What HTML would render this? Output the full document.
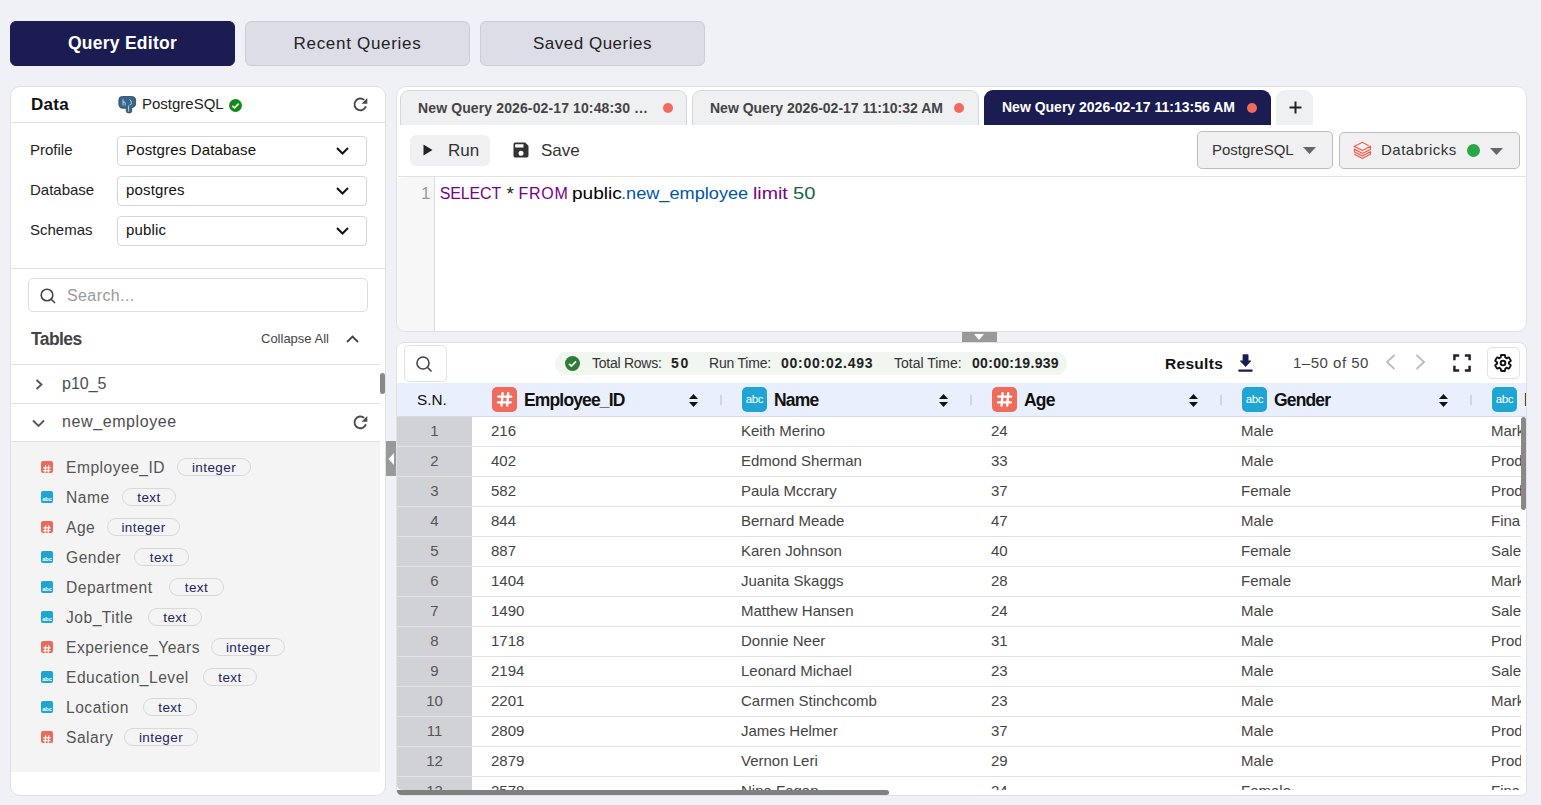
<!DOCTYPE html>
<html><head><meta charset="utf-8">
<style>
*{box-sizing:border-box;margin:0;padding:0}
html,body{width:1541px;height:805px;overflow:hidden;background:#f0f1f6;font-family:"Liberation Sans",sans-serif;color:#222}
.a{position:absolute;white-space:nowrap}
.topbtn{position:absolute;top:21px;height:45px;width:225px;border-radius:6px;font-size:17px;display:flex;align-items:center;justify-content:center;background:#dddde7;border:1px solid #cdcdd8;color:#222}
.topbtn.act{background:#1b1c51;border-color:#1b1c51;color:#fff;font-weight:bold}
.panel{position:absolute;background:#fff;border:1px solid #e0e1e4;border-radius:10px}
.lbl{position:absolute;left:19px;font-size:15px;color:#222;white-space:nowrap;margin-top:-1px}
.sel{position:absolute;left:106px;width:250px;height:30px;border:1px solid #d6d6d6;border-radius:4px;font-size:15px;padding-left:8px;line-height:25px;color:#111;white-space:nowrap;letter-spacing:0.15px}
.sel svg{position:absolute;left:218px;top:10px}
.hl{position:absolute;height:1px;background:#e2e2e2}
.col{position:absolute;left:30px;height:20px;white-space:nowrap}
.col .ic{position:absolute;left:0;top:4px;width:12px;height:12px;border-radius:2px}
.col .ic.n{background:#ec6a5a}
.col .ic.t{background:#1ea5d3}
.col .nm{position:absolute;left:25px;top:0.5px;font-size:15.6px;color:#555;line-height:20px;letter-spacing:0.5px}
.pill{position:absolute;top:1px;height:18px;border:1px solid #d9d9d9;border-radius:9px;font-size:13.5px;color:#23265e;line-height:17px;text-align:center;letter-spacing:0.4px}
.tab{position:absolute;top:3px;height:35px;border:1px solid #d6d6da;border-bottom:none;border-radius:9px 9px 0 0;background:#eff0f2;font-size:14px;font-weight:bold;color:#444;white-space:nowrap}
.tab .t{position:absolute;top:8.5px}
.tab .dot{position:absolute;top:12px;width:10px;height:10px;border-radius:50%;background:#f06b5b}
.tab.act{background:#1b1c51;border-color:#1b1c51;color:#fff}
.dd{position:absolute;background:#f0f0f2;border:1px solid #bdbdbd;border-radius:5px;font-size:15px;color:#333;white-space:nowrap}
.th{position:absolute;top:0;height:33px}
.th .hi{position:absolute;left:20px;top:4px;width:25px;height:25px;border-radius:5px}
.th .hi.n{background:#ef6b5b}
.th .hi.t{background:#1ea5d3}
.th .ht{position:absolute;left:52px;top:6.5px;font-size:17.5px;font-weight:bold;color:#111;letter-spacing:-0.85px}
.th .so{position:absolute;left:217px;top:10px}
.th .sp{position:absolute;left:248px;top:12px;width:2px;height:10px;background:#d3d6de}
.row{position:absolute;left:0;width:1124px;height:30px;border-bottom:1px solid #e3e3e3}
.row .sn{position:absolute;left:0;top:0;width:75px;height:29px;background:#d1d2d6;text-align:center;font-size:15px;color:#555;line-height:27px}
.row .c{position:absolute;top:0;font-size:15px;color:#444;line-height:27px;white-space:nowrap}
</style></head><body>

<div class="topbtn act" style="left:10px;font-size:17.5px;letter-spacing:0.25px">Query Editor</div>
<div class="topbtn" style="left:245px;letter-spacing:0.7px">Recent Queries</div>
<div class="topbtn" style="left:480px;letter-spacing:0.5px">Saved Queries</div>

<!-- LEFT PANEL -->
<div class="panel" style="left:10px;top:86px;width:376px;height:710px;overflow:hidden">
  <div class="a" style="left:20px;top:8px;font-size:17px;font-weight:bold;color:#111;letter-spacing:0.3px">Data</div>
  <svg class="a" style="left:107px;top:9px" width="19" height="18" viewBox="0 0 19 18"><path d="M0.9 3.6Q0.9 0.5 4.5 0.5H13.5Q17.6 0.5 17.6 4V8Q17.6 11.2 13.7 11.8V15.4Q13.7 16.9 11 16.9Q8.3 16.9 8.3 15.4V12.2H4.6Q0.9 12.2 0.9 8Z" fill="#336791" stroke="#4a4a4a" stroke-width="0.9"/><path d="M5 3.2V9.6M5 6.4Q6.9 4.9 7.2 7V9.6M11.6 3.4Q13.7 4.6 13.3 7.6Q12.9 9.2 11.8 8.6M10.6 9.5V15.5" stroke="#e6eef5" stroke-width="0.75" fill="none"/></svg>
  <div class="a" style="left:131px;top:8px;font-size:15px;color:#222">PostgreSQL</div>
  <svg class="a" style="left:218px;top:12px" width="13" height="13" viewBox="0 0 13 13"><circle cx="6.5" cy="6.5" r="6.5" fill="#138a17"/><path d="M3.3 6.8l2.2 2.1 4.2-4.3" stroke="#fff" stroke-width="1.6" fill="none"/></svg>
  <svg class="a" style="left:341px;top:9px" width="16" height="16" viewBox="0 0 16 16"><path d="M13.94 10.42A5.9 5.9 0 1 1 12.19 3.88" stroke="#4a4a4a" stroke-width="1.9" fill="none"/><path d="M15.3 1.9V7.8H9.5z" fill="#4a4a4a"/></svg>
  <div class="hl" style="left:0;top:35px;width:376px"></div>

  <div class="lbl" style="top:55px">Profile</div>
  <div class="sel" style="top:49px">Postgres Database<svg width="13" height="8" viewBox="0 0 13 8"><path d="M1 1l5.5 5.5L12 1" stroke="#111" stroke-width="2" fill="none"/></svg></div>
  <div class="lbl" style="top:95px">Database</div>
  <div class="sel" style="top:89px">postgres<svg width="13" height="8" viewBox="0 0 13 8"><path d="M1 1l5.5 5.5L12 1" stroke="#111" stroke-width="2" fill="none"/></svg></div>
  <div class="lbl" style="top:135px">Schemas</div>
  <div class="sel" style="top:129px">public<svg width="13" height="8" viewBox="0 0 13 8"><path d="M1 1l5.5 5.5L12 1" stroke="#111" stroke-width="2" fill="none"/></svg></div>
  <div class="hl" style="left:0;top:181px;width:376px"></div>

  <div class="a" style="left:17px;top:191px;width:340px;height:34px;border:1px solid #dedede;border-radius:5px"></div>
  <svg class="a" style="left:29px;top:201px" width="17" height="16" viewBox="0 0 17 16"><circle cx="7" cy="7" r="5.8" stroke="#444" stroke-width="1.6" fill="none"/><path d="M11.2 11.2L15 15" stroke="#444" stroke-width="1.6"/></svg>
  <div class="a" style="left:56px;top:200px;font-size:16px;color:#9a9a9a;letter-spacing:0.4px">Search...</div>

  <div class="a" style="left:20px;top:242px;font-size:17.5px;font-weight:bold;color:#444;letter-spacing:-0.6px">Tables</div>
  <div class="a" style="left:250px;top:244px;font-size:13px;color:#444">Collapse All</div>
  <svg class="a" style="left:335px;top:247px" width="13" height="10" viewBox="0 0 13 10"><path d="M1 8l5.5-5.5L12 8" stroke="#444" stroke-width="1.8" fill="none"/></svg>
  <div class="hl" style="left:0;top:277px;width:369px"></div>

  <svg class="a" style="left:24px;top:292px" width="9" height="11" viewBox="0 0 9 11"><path d="M1.5 1l5 4.5-5 4.5" stroke="#555" stroke-width="1.8" fill="none"/></svg>
  <div class="a" style="left:51px;top:288px;font-size:16px;color:#4d4d4d">p10_5</div>
  <div class="hl" style="left:0;top:316px;width:369px"></div>

  <svg class="a" style="left:21px;top:332px" width="13" height="9" viewBox="0 0 13 9"><path d="M1 1.5l5.5 5.5L12 1.5" stroke="#555" stroke-width="1.8" fill="none"/></svg>
  <div class="a" style="left:51px;top:326px;font-size:16px;color:#4d4d4d;letter-spacing:0.6px">new_employee</div>
  <svg class="a" style="left:341px;top:327px" width="16" height="16" viewBox="0 0 16 16"><path d="M13.94 10.42A5.9 5.9 0 1 1 12.19 3.88" stroke="#4a4a4a" stroke-width="1.9" fill="none"/><path d="M15.3 1.9V7.8H9.5z" fill="#4a4a4a"/></svg>
  <div class="hl" style="left:0;top:354px;width:369px"></div>

  <div class="a" style="left:0;top:355px;width:369px;height:330px;background:#f4f4f4"></div>
  <div class="a" style="left:369px;top:286px;width:5px;height:21px;border-radius:3px;background:#888"></div>

  <div class="col" style="top:370px"><div class="ic n"><svg width=12 height=12 viewBox="0 0 12 12"><path d="M4.7 2.4L4.1 9.7M7.8 2.4L7.2 9.7M2.2 4.8h7.4M2.1 7.6h7.4" stroke="#fff" stroke-width="1.15"/></svg></div><div class="nm">Employee_ID</div><div class="pill" style="left:136px;width:74px">integer</div></div>
  <div class="col" style="top:400px"><div class="ic t"><svg width=12 height=12 viewBox="0 0 12 12"><text x="6" y="7.6" font-size="5.6" font-weight="bold" fill="#fff" text-anchor="middle" font-family="Liberation Sans">abc</text></svg></div><div class="nm">Name</div><div class="pill" style="left:81px;width:54px">text</div></div>
  <div class="col" style="top:430px"><div class="ic n"><svg width=12 height=12 viewBox="0 0 12 12"><path d="M4.7 2.4L4.1 9.7M7.8 2.4L7.2 9.7M2.2 4.8h7.4M2.1 7.6h7.4" stroke="#fff" stroke-width="1.15"/></svg></div><div class="nm">Age</div><div class="pill" style="left:66px;width:73px">integer</div></div>
  <div class="col" style="top:460px"><div class="ic t"><svg width=12 height=12 viewBox="0 0 12 12"><text x="6" y="7.6" font-size="5.6" font-weight="bold" fill="#fff" text-anchor="middle" font-family="Liberation Sans">abc</text></svg></div><div class="nm">Gender</div><div class="pill" style="left:93px;width:55px">text</div></div>
  <div class="col" style="top:490px"><div class="ic t"><svg width=12 height=12 viewBox="0 0 12 12"><text x="6" y="7.6" font-size="5.6" font-weight="bold" fill="#fff" text-anchor="middle" font-family="Liberation Sans">abc</text></svg></div><div class="nm">Department</div><div class="pill" style="left:128px;width:55px">text</div></div>
  <div class="col" style="top:520px"><div class="ic t"><svg width=12 height=12 viewBox="0 0 12 12"><text x="6" y="7.6" font-size="5.6" font-weight="bold" fill="#fff" text-anchor="middle" font-family="Liberation Sans">abc</text></svg></div><div class="nm">Job_Title</div><div class="pill" style="left:107px;width:54px">text</div></div>
  <div class="col" style="top:550px"><div class="ic n"><svg width=12 height=12 viewBox="0 0 12 12"><path d="M4.7 2.4L4.1 9.7M7.8 2.4L7.2 9.7M2.2 4.8h7.4M2.1 7.6h7.4" stroke="#fff" stroke-width="1.15"/></svg></div><div class="nm">Experience_Years</div><div class="pill" style="left:170px;width:74px">integer</div></div>
  <div class="col" style="top:580px"><div class="ic t"><svg width=12 height=12 viewBox="0 0 12 12"><text x="6" y="7.6" font-size="5.6" font-weight="bold" fill="#fff" text-anchor="middle" font-family="Liberation Sans">abc</text></svg></div><div class="nm">Education_Level</div><div class="pill" style="left:162px;width:54px">text</div></div>
  <div class="col" style="top:610px"><div class="ic t"><svg width=12 height=12 viewBox="0 0 12 12"><text x="6" y="7.6" font-size="5.6" font-weight="bold" fill="#fff" text-anchor="middle" font-family="Liberation Sans">abc</text></svg></div><div class="nm">Location</div><div class="pill" style="left:102px;width:54px">text</div></div>
  <div class="col" style="top:640px"><div class="ic n"><svg width=12 height=12 viewBox="0 0 12 12"><path d="M4.7 2.4L4.1 9.7M7.8 2.4L7.2 9.7M2.2 4.8h7.4M2.1 7.6h7.4" stroke="#fff" stroke-width="1.15"/></svg></div><div class="nm">Salary</div><div class="pill" style="left:83px;width:74px">integer</div></div>
</div>

<!-- collapse handle -->
<div class="a" style="left:386px;top:441px;width:10px;height:35px;background:#999"></div>
<svg class="a" style="left:387px;top:452px" width="8" height="14" viewBox="0 0 8 14"><path d="M7 1L1.5 7 7 13z" fill="#fff"/></svg>

<!-- EDITOR PANEL -->
<div class="panel" id="ed" style="left:396px;top:86px;width:1131px;height:246px;overflow:hidden"><div class="a" style="left:1px;top:0;width:1129px;height:244px">
  <div class="tab" style="left:2px;width:287px"><span class="t" style="left:17px;letter-spacing:0.12px">New Query 2026-02-17 10:48:30 …</span><span class="dot" style="left:262px"></span></div>
  <div class="tab" style="left:294px;width:287px"><span class="t" style="left:17px">New Query 2026-02-17 11:10:32 AM</span><span class="dot" style="left:261px"></span></div>
  <div class="tab act" style="left:586px;width:287px"><span class="t" style="left:17px;top:7.5px">New Query 2026-02-17 11:13:56 AM</span><span class="dot" style="left:262px"></span></div>
  <div class="tab" style="left:878px;width:37px;border:none"><svg class="a" style="left:13px;top:11px" width="13" height="13" viewBox="0 0 13 13"><path d="M6.5 0.5v12M0.5 6.5h12" stroke="#222" stroke-width="2"/></svg></div>

  <div class="a" style="left:12px;top:48px;width:80px;height:31px;background:#f0f0f2;border-radius:6px"></div>
  <svg class="a" style="left:25px;top:57px" width="10" height="12" viewBox="0 0 10 12"><path d="M0.5 0.5L9.5 6 0.5 11.5z" fill="#222"/></svg>
  <div class="a" style="left:50px;top:54px;font-size:17px;color:#333">Run</div>
  <svg class="a" style="left:113px;top:53px" width="20" height="20" viewBox="0 0 24 24"><path d="M17 3H5a2 2 0 0 0-2 2v14a2 2 0 0 0 2 2h14a2 2 0 0 0 2-2V7l-4-4zm-5 16a3 3 0 1 1 0-6 3 3 0 0 1 0 6zm3-10H5V5h10v4z" fill="#333"/></svg>
  <div class="a" style="left:143px;top:54px;font-size:17px;color:#333">Save</div>

  <div class="dd" style="left:799px;top:44px;width:136px;height:38px"><span class="a" style="left:14px;top:9px">PostgreSQL</span><svg class="a" style="left:105px;top:15px" width="13" height="7" viewBox="0 0 13 7"><path d="M0 0h13L6.5 7z" fill="#666"/></svg></div>
  <div class="dd" style="left:941px;top:45px;width:181px;height:37px"><svg class="a" style="left:10px;top:6px" width="23" height="23" viewBox="0 0 23 23"><path d="M18.6 6.6L12.4 3.3 4.3 7.4 12.4 11.4 20.4 7.4V10.4L12.4 14.4 4.4 10.2V12.9L12.4 16.9 20.4 12.7V15.2L12.4 19.4 4.3 15.3" fill="none" stroke="#ff4530" stroke-width="1.05" stroke-linejoin="miter"/></svg><span class="a" style="left:41px;top:8px;letter-spacing:0.5px">Databricks</span><span class="a" style="left:127px;top:11px;width:13px;height:13px;border-radius:50%;background:#28a745"></span><svg class="a" style="left:150px;top:15px" width="13" height="7" viewBox="0 0 13 7"><path d="M0 0h13L6.5 7z" fill="#666"/></svg></div>
  <div class="hl" style="left:0;top:89px;width:1128px"></div>

  <div class="a" style="left:-1px;top:90px;width:38px;height:160px;background:#f7f7f7;border-right:1px solid #ddd;border-top-left-radius:8px"></div>
  <div class="a" style="left:23px;top:97px;font-size:17px;color:#999">1</div>
  <span class="a" style="left:41.8px;top:98px;font-size:16px;color:#708;letter-spacing:-0.15px">SELECT</span><span class="a" style="left:108.5px;top:96px;font-size:19px;color:#222;letter-spacing:0px">*</span><span class="a" style="left:120.4px;top:98px;font-size:16px;color:#708;letter-spacing:0.8px">FROM</span><span class="a" style="left:173.6px;top:98px;font-size:16px;color:#000;transform:scaleX(1.19);transform-origin:0 0">public</span><span class="a" style="left:222.9px;top:98px;font-size:16px;color:#05a;transform:scaleX(1.135);transform-origin:0 0">.new_employee</span><span class="a" style="left:355.0px;top:98px;font-size:16px;color:#708;transform:scaleX(1.22);transform-origin:0 0">limit</span><span class="a" style="left:394.5px;top:98px;font-size:16px;color:#164;transform:scaleX(1.26);transform-origin:0 0">50</span>
</div></div>

<div class="a" style="left:962px;top:332px;width:35px;height:10px;background:#999"></div>
<svg class="a" style="left:974px;top:334px" width="10" height="6" viewBox="0 0 10 6"><path d="M0 0h10L5 6z" fill="#fff"/></svg>
<!-- RESULTS PANEL -->
<div class="panel" id="res" style="left:396px;top:342px;width:1131px;height:454px;border-radius:8px 8px 6px 6px"><div class="a" style="left:1px;top:0;width:1129px;height:452px">
  <div class="a" style="left:6px;top:2px;width:43px;height:37px;border:1px solid #e2e2e2;border-radius:5px"></div>
  <svg class="a" style="left:18px;top:13px" width="17" height="16" viewBox="0 0 17 16"><circle cx="7" cy="7" r="6" stroke="#444" stroke-width="1.6" fill="none"/><path d="M11.3 11.3L15.5 15.5" stroke="#444" stroke-width="1.6"/></svg>
  <div class="a" style="left:157px;top:9px;width:512px;height:23px;border-radius:12px;background:#f1f6f1"></div>
  <svg class="a" style="left:167px;top:13px" width="15" height="15" viewBox="0 0 15 15"><circle cx="7.5" cy="7.5" r="7.5" fill="#2e7d32"/><path d="M4 7.8l2.4 2.3 4.6-4.8" stroke="#fff" stroke-width="1.7" fill="none"/></svg>
  <div class="a" style="left:194px;top:12px;font-size:14px;color:#333;letter-spacing:-0.25px">Total Rows:</div>
  <div class="a" style="left:273px;top:12px;font-size:14px;font-weight:bold;color:#222;letter-spacing:1.6px">50</div>
  <div class="a" style="left:311px;top:12px;font-size:14px;color:#333;letter-spacing:-0.2px">Run Time:</div>
  <div class="a" style="left:383px;top:12px;font-size:14px;font-weight:bold;color:#222;letter-spacing:0.75px">00:00:02.493</div>
  <div class="a" style="left:496px;top:12px;font-size:14px;color:#333">Total Time:</div>
  <div class="a" style="left:574px;top:12px;font-size:14px;font-weight:bold;color:#222;letter-spacing:0.3px">00:00:19.939</div>

  <div class="a" style="left:767px;top:12px;font-size:15.5px;font-weight:bold;color:#111;letter-spacing:0.3px">Results</div>
  <svg class="a" style="left:840px;top:11px" width="16" height="19" viewBox="0 0 16 19"><path d="M4.6 1.2Q4.6 0.2 5.6 0.2H9.5Q10.5 0.2 10.5 1.2V6.6H12.9Q13.4 6.8 13 7.3L7.6 13 2.2 7.3Q1.8 6.8 2.3 6.6H4.6z" fill="#1b1c51"/><rect x="0.2" y="15.6" width="14.5" height="2.1" rx="1" fill="#1b1c51"/></svg>
  <div class="a" style="left:895px;top:11px;font-size:15px;color:#444;letter-spacing:0.5px">1–50 of 50</div>
  <svg class="a" style="left:987px;top:11px" width="11" height="16" viewBox="0 0 11 16"><path d="M9.5 1L2 8l7.5 7" stroke="#bbb" stroke-width="1.8" fill="none"/></svg>
  <svg class="a" style="left:1017px;top:11px" width="11" height="16" viewBox="0 0 11 16"><path d="M1.5 1L9 8l-7.5 7" stroke="#bbb" stroke-width="1.8" fill="none"/></svg>
  <svg class="a" style="left:1055px;top:11px" width="18" height="18" viewBox="0 0 19 19"><path d="M1.5 6.5V1.5h5M12.5 1.5h5v5M17.5 12.5v5h-5M6.5 17.5h-5v-5" stroke="#222" stroke-width="2.6" fill="none"/></svg>
  <div class="a" style="left:1089px;top:4px;width:33px;height:32px;border:1px solid #e2e2e2;border-radius:5px"></div>
  <svg class="a" style="left:1095px;top:10px" width="20" height="20" viewBox="0 0 24 24"><path d="M19.14 12.94c.04-.3.06-.61.06-.94 0-.32-.02-.64-.07-.94l2.03-1.58a.49.49 0 0 0 .12-.61l-1.92-3.32a.488.488 0 0 0-.59-.22l-2.39.96c-.5-.38-1.03-.7-1.62-.94l-.36-2.540a.484.484 0 0 0-.48-.41h-3.84c-.24 0-.43.17-.47.41l-.36 2.54c-.59.24-1.13.57-1.62.94l-2.39-.96c-.22-.08-.47 0-.59.22L2.74 8.87c-.12.21-.08.47.12.61l2.030 1.58c-.05.3-.09.63-.09.94s.02.64.07.94l-2.03 1.58a.49.49 0 0 0-.12.61l1.92 3.32c.12.22.37.29.59.22l2.39-.96c.5.38 1.03.7 1.62.94l.36 2.54c.05.24.24.41.48.41h3.84c.24 0 .44-.17.47-.41l.36-2.54c.59-.24 1.13-.56 1.62-.94l2.39.96c.22.08.47 0 .59-.22l1.92-3.32c.12-.22.07-.47-.12-.61l-2.01-1.58z" fill="none" stroke="#111" stroke-width="2.3" stroke-linejoin="round"/><circle cx="12" cy="12" r="2.8" fill="none" stroke="#111" stroke-width="2.3"/></svg>

  <div class="a" style="left:-1px;top:40px;width:1129px;height:34px;background:#e9effc;border-bottom:1px solid #d5dae6"></div>
  <div class="a" style="left:-1px;top:40px;width:1129px;height:33px;overflow:hidden">
    <div class="a" style="left:20px;top:8px;font-size:15.3px;color:#111">S.N.</div>
    <div class="th" style="left:75px;width:250px"><div class="hi n"><svg width="25" height="25" viewBox="0 0 25 25"><path d="M10.6 6.2L9.6 18.6M16.2 6.2L15.2 18.6M6.3 9.7H19.2M5.9 15.4H18.8" stroke="#fff" stroke-width="2.3" stroke-linecap="round"/></svg></div><div class="ht">Employee_ID</div><div class="so"><svg width="9" height="13" viewBox="0 0 9 13"><path d="M4.5 0L9 5H0zM4.5 13L0 8h9z" fill="#111"/></svg></div><div class="sp"></div></div><div class="th" style="left:325px;width:250px"><div class="hi t"><svg width="25" height="25" viewBox="0 0 25 25"><text x="12.5" y="16.3" font-size="11.5" fill="#fff" text-anchor="middle" font-family="Liberation Sans" letter-spacing="-0.4">abc</text></svg></div><div class="ht">Name</div><div class="so"><svg width="9" height="13" viewBox="0 0 9 13"><path d="M4.5 0L9 5H0zM4.5 13L0 8h9z" fill="#111"/></svg></div><div class="sp"></div></div><div class="th" style="left:575px;width:250px"><div class="hi n"><svg width="25" height="25" viewBox="0 0 25 25"><path d="M10.6 6.2L9.6 18.6M16.2 6.2L15.2 18.6M6.3 9.7H19.2M5.9 15.4H18.8" stroke="#fff" stroke-width="2.3" stroke-linecap="round"/></svg></div><div class="ht">Age</div><div class="so"><svg width="9" height="13" viewBox="0 0 9 13"><path d="M4.5 0L9 5H0zM4.5 13L0 8h9z" fill="#111"/></svg></div><div class="sp"></div></div><div class="th" style="left:825px;width:250px"><div class="hi t"><svg width="25" height="25" viewBox="0 0 25 25"><text x="12.5" y="16.3" font-size="11.5" fill="#fff" text-anchor="middle" font-family="Liberation Sans" letter-spacing="-0.4">abc</text></svg></div><div class="ht">Gender</div><div class="so"><svg width="9" height="13" viewBox="0 0 9 13"><path d="M4.5 0L9 5H0zM4.5 13L0 8h9z" fill="#111"/></svg></div><div class="sp"></div></div><div class="th" style="left:1075px;width:250px"><div class="hi t"><svg width="25" height="25" viewBox="0 0 25 25"><text x="12.5" y="16.3" font-size="11.5" fill="#fff" text-anchor="middle" font-family="Liberation Sans" letter-spacing="-0.4">abc</text></svg></div><div class="ht">Department</div><div class="so"><svg width="9" height="13" viewBox="0 0 9 13"><path d="M4.5 0L9 5H0zM4.5 13L0 8h9z" fill="#111"/></svg></div><div class="sp"></div></div>
  </div>
  <div class="a" style="left:-1px;top:74px;width:1124px;height:373px;overflow:hidden;border-bottom-left-radius:5px"><div class="row" style="top:0px"><div class="sn">1</div><div class="c" style="left:94px">216</div><div class="c" style="left:344px">Keith Merino</div><div class="c" style="left:594px">24</div><div class="c" style="left:844px">Male</div><div class="c" style="left:1094px">Marketing</div></div><div class="row" style="top:30px"><div class="sn">2</div><div class="c" style="left:94px">402</div><div class="c" style="left:344px">Edmond Sherman</div><div class="c" style="left:594px">33</div><div class="c" style="left:844px">Male</div><div class="c" style="left:1094px">Product</div></div><div class="row" style="top:60px"><div class="sn">3</div><div class="c" style="left:94px">582</div><div class="c" style="left:344px">Paula Mccrary</div><div class="c" style="left:594px">37</div><div class="c" style="left:844px">Female</div><div class="c" style="left:1094px">Product</div></div><div class="row" style="top:90px"><div class="sn">4</div><div class="c" style="left:94px">844</div><div class="c" style="left:344px">Bernard Meade</div><div class="c" style="left:594px">47</div><div class="c" style="left:844px">Male</div><div class="c" style="left:1094px">Finance</div></div><div class="row" style="top:120px"><div class="sn">5</div><div class="c" style="left:94px">887</div><div class="c" style="left:344px">Karen Johnson</div><div class="c" style="left:594px">40</div><div class="c" style="left:844px">Female</div><div class="c" style="left:1094px">Sales</div></div><div class="row" style="top:150px"><div class="sn">6</div><div class="c" style="left:94px">1404</div><div class="c" style="left:344px">Juanita Skaggs</div><div class="c" style="left:594px">28</div><div class="c" style="left:844px">Female</div><div class="c" style="left:1094px">Marketing</div></div><div class="row" style="top:180px"><div class="sn">7</div><div class="c" style="left:94px">1490</div><div class="c" style="left:344px">Matthew Hansen</div><div class="c" style="left:594px">24</div><div class="c" style="left:844px">Male</div><div class="c" style="left:1094px">Sales</div></div><div class="row" style="top:210px"><div class="sn">8</div><div class="c" style="left:94px">1718</div><div class="c" style="left:344px">Donnie Neer</div><div class="c" style="left:594px">31</div><div class="c" style="left:844px">Male</div><div class="c" style="left:1094px">Product</div></div><div class="row" style="top:240px"><div class="sn">9</div><div class="c" style="left:94px">2194</div><div class="c" style="left:344px">Leonard Michael</div><div class="c" style="left:594px">23</div><div class="c" style="left:844px">Male</div><div class="c" style="left:1094px">Sales</div></div><div class="row" style="top:270px"><div class="sn">10</div><div class="c" style="left:94px">2201</div><div class="c" style="left:344px">Carmen Stinchcomb</div><div class="c" style="left:594px">23</div><div class="c" style="left:844px">Male</div><div class="c" style="left:1094px">Marketing</div></div><div class="row" style="top:300px"><div class="sn">11</div><div class="c" style="left:94px">2809</div><div class="c" style="left:344px">James Helmer</div><div class="c" style="left:594px">37</div><div class="c" style="left:844px">Male</div><div class="c" style="left:1094px">Product</div></div><div class="row" style="top:330px"><div class="sn">12</div><div class="c" style="left:94px">2879</div><div class="c" style="left:344px">Vernon Leri</div><div class="c" style="left:594px">29</div><div class="c" style="left:844px">Male</div><div class="c" style="left:1094px">Product</div></div><div class="row" style="top:360px"><div class="sn">13</div><div class="c" style="left:94px">2578</div><div class="c" style="left:344px">Nina Fagan</div><div class="c" style="left:594px">24</div><div class="c" style="left:844px">Female</div><div class="c" style="left:1094px">Finance</div></div></div>
  <div class="a" style="left:1123px;top:74px;width:5px;height:93px;border-radius:3px;background:#888"></div>
  <div class="a" style="left:-1px;top:447px;width:492px;height:5px;border-radius:0 3px 3px 5px;background:#808080"></div>
</div></div>

</body></html>
